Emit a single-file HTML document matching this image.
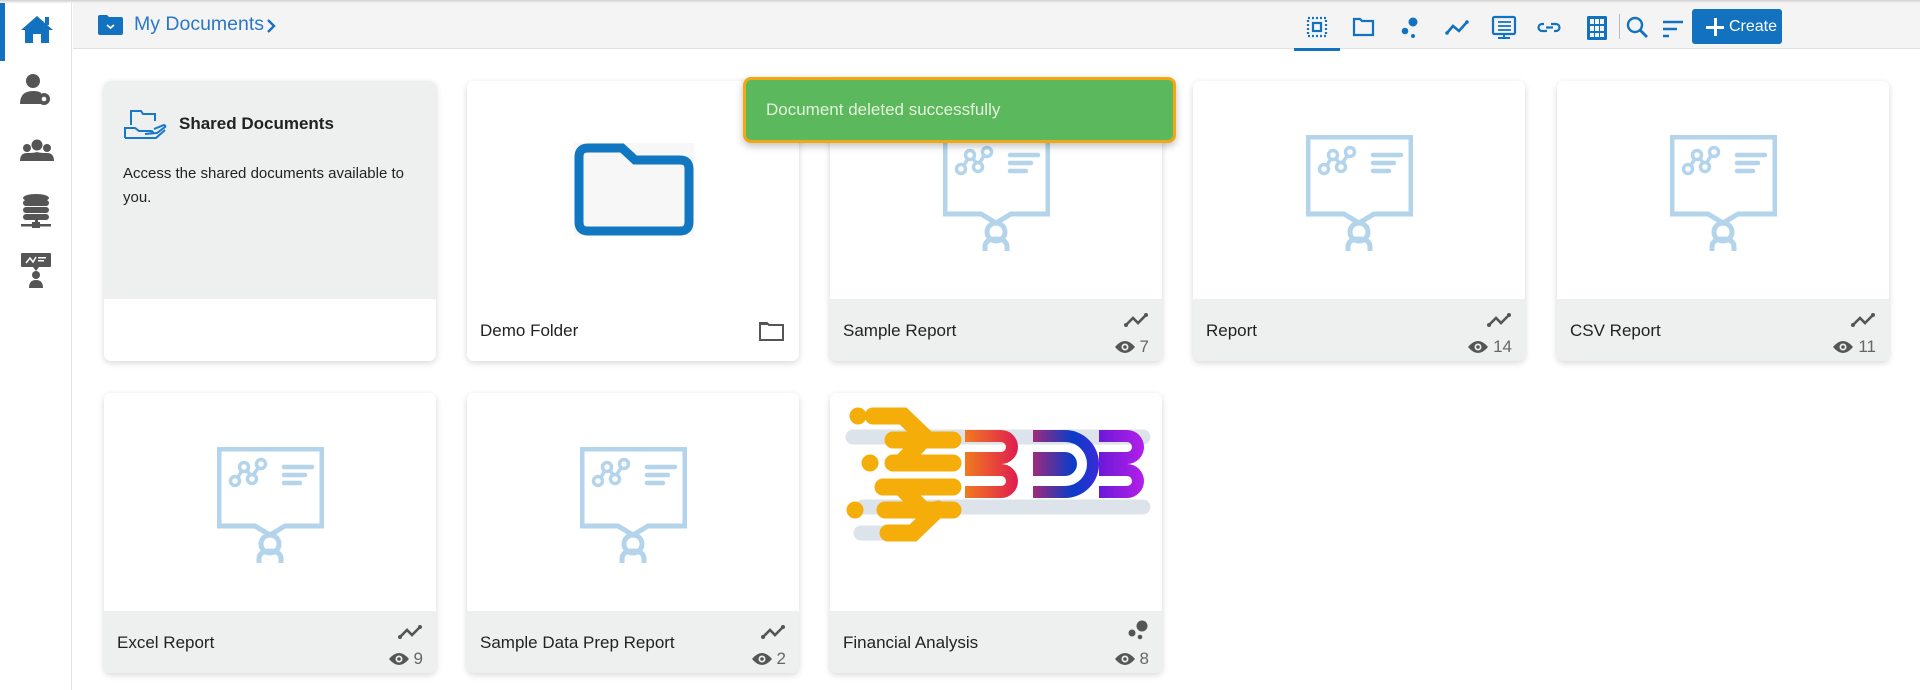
<!DOCTYPE html>
<html><head><meta charset="utf-8">
<style>
*{box-sizing:border-box;margin:0;padding:0}
body{width:1920px;height:690px;overflow:hidden;background:#fff;font-family:"Liberation Sans",sans-serif;position:relative}
.side{position:absolute;left:0;top:0;width:72px;height:690px;background:#fff;border-right:1px solid #e3e3e3}
.act{position:absolute;left:0;top:0;width:5px;height:61px;background:#1272c0}
.top{position:absolute;left:73px;top:0;right:0;height:49px;background:#f4f4f4;border-bottom:1px solid #e2e2e2}
.shadow{position:absolute;left:0;top:0;width:1920px;height:3px;background:linear-gradient(#d0d0d0,#f4f4f4)}
.card{position:absolute;width:332px;height:280px;background:#fff;border-radius:7px;box-shadow:0 2px 7px rgba(0,0,0,.16);overflow:hidden}
.foot{position:absolute;left:0;bottom:0;width:100%;height:62px;background:#eef0f0}
.name{position:absolute;left:13px;top:22px;font-size:17px;color:#222}
.views{position:absolute;right:13px;top:38px;font-size:17px;color:#666;display:flex;align-items:center;gap:5px}
.ln{position:absolute;right:13px;top:13px}
.ic{position:absolute}
</style></head><body>
<div class="side"><div class="act"></div>
<svg class="ic" style="left:20px;top:14px" width="34" height="30" viewBox="0 0 34 30"><path d="M17 2 L1 16 L5 16 L5 29 L13 29 L13 20 L21 20 L21 29 L29 29 L29 16 L33 16 Z" fill="#1272c0"/><rect x="25" y="3" width="4" height="8" fill="#1272c0"/></svg>
<svg class="ic" style="left:20px;top:74px" width="32" height="32" viewBox="0 0 32 32"><circle cx="13" cy="7" r="7" fill="#555"/><path d="M0 30 Q0 17 13 17 Q19 17 21 19 L21 30 Z" fill="#555"/><circle cx="24" cy="25" r="6" fill="#555"/><circle cx="24" cy="25" r="2.3" fill="#fff"/></svg>
<svg class="ic" style="left:20px;top:139px" width="34" height="24" viewBox="0 0 34 24"><circle cx="17" cy="6" r="5.5" fill="#555"/><circle cx="7" cy="9" r="4" fill="#555"/><circle cx="27" cy="9" r="4" fill="#555"/><path d="M0 22 Q0 14 7 14 Q14 14 17 13 Q20 14 27 14 Q34 14 34 22 Z" fill="#555"/></svg>
<svg class="ic" style="left:21px;top:194px" width="30" height="35" viewBox="0 0 30 35"><ellipse cx="15" cy="4" rx="13" ry="4" fill="#555"/><rect x="2" y="6" width="26" height="6" rx="3" fill="#555"/><rect x="2" y="13" width="26" height="6" rx="3" fill="#555"/><rect x="2" y="20" width="26" height="6" rx="3" fill="#555"/><rect x="14" y="26" width="3" height="5" fill="#555"/><rect x="0" y="30" width="30" height="2.5" fill="#555"/><rect x="11" y="28" width="8" height="6" fill="#555"/></svg>
<svg class="ic" style="left:21px;top:253px" width="30" height="35" viewBox="0 0 30 35"><rect x="0" y="0" width="30" height="14" rx="1" fill="#555"/><path d="M5 10 L9 5 L12 9 L15 4" stroke="#fff" stroke-width="1.5" fill="none"/><rect x="17" y="4" width="8" height="1.5" fill="#fff"/><rect x="17" y="7" width="6" height="1.5" fill="#fff"/><path d="M12 14 L15 18 L18 14Z" fill="#555"/><circle cx="15" cy="22" r="4" fill="#555"/><path d="M8 35 Q8 27 15 27 Q22 27 22 35Z" fill="#555"/></svg>
</div>
<div class="top">
<svg class="ic" style="left:25px;top:15px" width="25" height="20" viewBox="0 0 25 20"><path d="M0 2 Q0 0 2 0 L9 0 L11 2 L23 2 Q25 2 25 4 L25 18 Q25 20 23 20 L2 20 Q0 20 0 18Z" fill="#1272c0"/><path d="M9 10 L12.5 13 L16 10" stroke="#fff" stroke-width="1.8" fill="none"/></svg>
<div style="position:absolute;left:61px;top:13px;font-size:19.5px;color:#2a78c6">My Documents</div>
<svg class="ic" style="left:193px;top:19px" width="10" height="14" viewBox="0 0 10 14"><path d="M2 1 L8 7 L2 13" stroke="#1a6fc0" stroke-width="2.4" fill="none"/></svg>
</div>
<div class="shadow"></div>
<!-- toolbar -->
<svg class="ic" style="left:1294px;top:10px" width="320" height="42" viewBox="1294 10 320 42">
<g fill="none" stroke="#1272c0" stroke-width="2.2">
<rect x="1308" y="18" width="18" height="18" stroke-dasharray="2 2"/><rect x="1313" y="23" width="8" height="8"/>
<path d="M1354 19 L1360 19 L1362 21 L1373 21 L1373 35 L1354 35 Z"/>
<path d="M1447 33 L1453 26 L1459 31 L1467 22" stroke-width="2.6"/>
<rect x="1493" y="17" width="22" height="17" rx="1.5"/><path d="M1498 22 h13 M1498 26 h13 M1498 30 h13" stroke-width="1.8"/>
<path d="M1544 24 h-2 a3.5 3.5 0 0 0 0 7 h5 M1554 31 h2 a3.5 3.5 0 0 0 0 -7 h-5 M1546 27.5 h7"/>
</g>
<rect x="1503" y="34" width="2" height="3" fill="#1272c0"/><rect x="1498" y="37" width="12" height="2" fill="#1272c0"/>
<circle cx="1413" cy="22" r="4.5" fill="#1272c0"/><circle cx="1405" cy="31" r="3.3" fill="#1272c0"/><circle cx="1413" cy="36" r="2" fill="#1272c0"/>
<circle cx="1447" cy="33" r="1.8" fill="#1272c0"/><circle cx="1467" cy="22" r="1.8" fill="#1272c0"/>
<g fill="#1272c0"><rect x="1587" y="16" width="20" height="24" rx="1.5"/></g>
<g fill="#f4f4f4"><rect x="1590" y="19" width="4" height="5"/><rect x="1595" y="19" width="4" height="5"/><rect x="1600" y="19" width="4" height="5"/><rect x="1590" y="26" width="4" height="5"/><rect x="1595" y="26" width="4" height="5"/><rect x="1600" y="26" width="4" height="5"/><rect x="1590" y="33" width="4" height="4"/><rect x="1595" y="33" width="4" height="4"/><rect x="1600" y="33" width="4" height="4"/></g>
<rect x="1294" y="48" width="46" height="3" fill="#1272c0"/>
</svg>
<div style="position:absolute;left:1619px;top:14px;width:1px;height:25px;background:#bbb"></div>
<svg class="ic" style="left:1625px;top:14px" width="70" height="28" viewBox="0 0 70 28"><circle cx="10" cy="11" r="7" fill="none" stroke="#1272c0" stroke-width="2.4"/><path d="M15 16 L22 23" stroke="#1272c0" stroke-width="2.8"/><path d="M38 8 h20 M38 15 h14 M38 22 h6" stroke="#1272c0" stroke-width="2.4"/></svg>
<div style="position:absolute;left:1692px;top:9px;width:90px;height:35px;background:#1272c0;border-radius:3px;color:#fff;font-size:16px;line-height:35px;padding-left:37px">Create</div>
<div style="position:absolute;left:1714px;top:18px;width:2.5px;height:18px;background:#fff"></div><div style="position:absolute;left:1706px;top:26px;width:18px;height:2.5px;background:#fff"></div>

<!-- cards -->
<div class="card" style="left:104px;top:81px;background:#eef0f0">
<div class="foot" style="background:#fff"></div>
<svg class="ic" style="left:19px;top:28px" width="44" height="30" viewBox="0 0 44 30"><path d="M8 16 L8 2 L18 2 L20 5 L32 5 L32 12 M2 29 L2 19 L12 19 L16 22 L28 22 Q30 22 30 24 L22 25 L34 24 L42 18 Q43 17 41 16 L31 20" fill="none" stroke="#1a78c8" stroke-width="2"/><path d="M2 29 L33 29 L42 21" fill="none" stroke="#1a78c8" stroke-width="2"/></svg>
<div style="position:absolute;left:75px;top:33px;font-size:17px;font-weight:bold;color:#222">Shared Documents</div>
<div style="position:absolute;left:19px;top:81px;width:300px;font-size:15px;line-height:24px;color:#222">Access the shared documents available to you.</div>
</div>

<div class="card" style="left:467px;top:81px">
<svg class="ic" style="left:107px;top:62px" width="120" height="93" viewBox="0 0 120 93"><rect x="0" y="0" width="120" height="93" fill="#f7f7f8"/><path d="M5 14 Q5 5 14 5 L48 5 L61 17 L106 17 Q115 17 115 26 L115 79 Q115 88 106 88 L14 88 Q5 88 5 79 Z" fill="none" stroke="#1177c0" stroke-width="9"/></svg>
<div class="foot" style="background:#fff"><div class="name">Demo Folder</div>
<svg class="ic" style="left:292px;top:22px" width="25" height="20" viewBox="0 0 25 20"><path d="M1 2 L8 2 L10 4 L24 4 L24 19 L1 19 Z" fill="none" stroke="#555" stroke-width="2"/><path d="M1 2 L8 2 L10 4 L1 4Z" fill="#555"/></svg></div>
</div>

<svg width="0" height="0" style="position:absolute"><defs>
<symbol id="rep" viewBox="0 0 107 116"><g fill="none" stroke="#b3d4ea" stroke-width="5"><path d="M2 2 H105 V79 H68 L53 88 L38 79 H2 Z"/><circle cx="53" cy="97" r="9"/><path d="M42 116 V112 Q42 104 53 104 Q64 104 64 112 V116"/><path d="M20 32 L27 20 L35 30 L43 18" stroke-width="3.5"/><path d="M67 20 H95 M67 28 H88 M67 36 H83" stroke-width="4.5" stroke-linecap="round"/></g><g fill="#fff" stroke="#b3d4ea" stroke-width="3.5"><circle cx="18" cy="34" r="4.5"/><circle cx="27" cy="20" r="4.5"/><circle cx="35" cy="32" r="4.5"/><circle cx="44" cy="17" r="4.5"/></g></symbol>
<symbol id="line" viewBox="0 0 26 16"><path d="M3 13 L10 6 L15 11 L23 3" stroke="#555" stroke-width="2.6" fill="none"/><circle cx="3" cy="13" r="2" fill="#555"/><circle cx="23" cy="3" r="2" fill="#555"/></symbol>
<symbol id="eye" viewBox="0 0 20 14"><path d="M0 7 Q10 -5 20 7 Q10 19 0 7Z" fill="#555"/><circle cx="10" cy="7" r="3.5" fill="#eef0f0"/><circle cx="10" cy="7" r="1.8" fill="#555"/></symbol>
</defs></svg>

<div class="card" style="left:830px;top:81px"><svg class="ic" style="left:113px;top:54px" width="107" height="116"><use href="#rep"/></svg><div class="foot"><div class="name">Sample Report</div><svg class="ln" width="26" height="16"><use href="#line"/></svg><div class="views"><svg width="20" height="14"><use href="#eye"/></svg>7</div></div></div>
<div class="card" style="left:1193px;top:81px"><svg class="ic" style="left:113px;top:54px" width="107" height="116"><use href="#rep"/></svg><div class="foot"><div class="name">Report</div><svg class="ln" width="26" height="16"><use href="#line"/></svg><div class="views"><svg width="20" height="14"><use href="#eye"/></svg>14</div></div></div>
<div class="card" style="left:1557px;top:81px"><svg class="ic" style="left:113px;top:54px" width="107" height="116"><use href="#rep"/></svg><div class="foot"><div class="name">CSV Report</div><svg class="ln" width="26" height="16"><use href="#line"/></svg><div class="views"><svg width="20" height="14"><use href="#eye"/></svg>11</div></div></div>

<div class="card" style="left:104px;top:393px"><svg class="ic" style="left:113px;top:54px" width="107" height="116"><use href="#rep"/></svg><div class="foot"><div class="name">Excel Report</div><svg class="ln" width="26" height="16"><use href="#line"/></svg><div class="views"><svg width="20" height="14"><use href="#eye"/></svg>9</div></div></div>
<div class="card" style="left:467px;top:393px"><svg class="ic" style="left:113px;top:54px" width="107" height="116"><use href="#rep"/></svg><div class="foot"><div class="name">Sample Data Prep Report</div><svg class="ln" width="26" height="16"><use href="#line"/></svg><div class="views"><svg width="20" height="14"><use href="#eye"/></svg>2</div></div></div>
<div class="card" style="left:830px;top:393px">
<svg class="ic" style="left:13px;top:14px" width="310" height="140" viewBox="0 0 310 140">
<defs><linearGradient id="g1" x1="0" x2="1"><stop offset="0" stop-color="#f07a20"/><stop offset="1" stop-color="#e01c50"/></linearGradient><linearGradient id="g2" x1="0" x2="1"><stop offset="0" stop-color="#a02a7a"/><stop offset=".6" stop-color="#0a3cc8"/><stop offset="1" stop-color="#3a2ad8"/></linearGradient><linearGradient id="g3" x1="0" x2="1"><stop offset="0" stop-color="#6a1ad8"/><stop offset="1" stop-color="#b41ee8"/></linearGradient></defs>
<g stroke-linecap="round" fill="none">
<path d="M10 30 H300 M20 100 H300 M18 126 H60" stroke="#dde3ea" stroke-width="15"/>
<path d="M30 9 H60 L85 33 M50 33 H110 M50 56 H110 M40 80 H110 M42 103 H110 M45 126 H70 L95 102 M58 56 L80 33 M58 80 L80 103" stroke="#f5ad0a" stroke-width="17"/>
</g>
<g fill="#f5ad0a"><circle cx="15" cy="9" r="8.5"/><circle cx="27" cy="56" r="8.5"/><circle cx="12" cy="103" r="8.5"/></g>
<path d="M122 23 H158 A17 17 0 0 1 158 57 A17 17 0 0 1 158 91 H122 V79 H158 A5 5 0 0 0 158 69 H122 V45 H158 A5 5 0 0 0 158 35 H122 Z" fill="url(#g1)"/>
<path d="M190 23 H222 A34 34 0 0 1 222 91 H190 V79 H222 A22 22 0 0 0 222 35 H190 Z M190 45 H222 A12 12 0 0 1 222 69 H190 Z" fill="url(#g2)"/>
<path d="M256 23 H284 A17 17 0 0 1 284 57 A17 17 0 0 1 284 91 H256 V79 H284 A5 5 0 0 0 284 69 H256 V45 H284 A5 5 0 0 0 284 35 H256 Z" fill="url(#g3)"/>
</svg>
<div class="foot"><div class="name">Financial Analysis</div>
<svg class="ln" width="22" height="20" viewBox="0 0 22 20" style="top:9px"><circle cx="15" cy="6" r="5.5" fill="#555"/><circle cx="5" cy="13" r="3.5" fill="#555"/><circle cx="13" cy="17" r="2.3" fill="#555"/></svg>
<div class="views"><svg width="20" height="14"><use href="#eye"/></svg>8</div></div></div>

<!-- toast -->
<div style="position:absolute;left:743px;top:77px;width:433px;height:66px;background:#5cb85c;border:3px solid #f3a712;border-radius:8px;box-shadow:0 3px 8px rgba(0,0,0,.25);color:#e4f3dc;font-size:17px;line-height:60px;padding-left:20px">Document deleted successfully</div>
</body></html>
